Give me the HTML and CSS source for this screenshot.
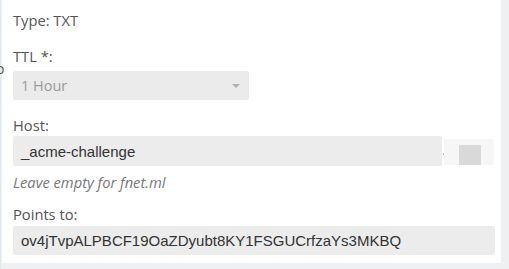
FILE: index.html
```html
<!DOCTYPE html>
<html>
<head>
<meta charset="utf-8">
<link rel="stylesheet" href="styles.css">
</head>
<body>
<div class="page">
  <span class="stray">o</span>
  <div class="card">
    <div class="line">Type: TXT</div>
    <div class="label ttl">TTL *:</div>
    <div class="select">
      <span>1 Hour</span>
      <span class="caret"></span>
    </div>
    <div class="label host">Host:</div>
    <div class="host-row">
      <div class="input host-input">_acme-challenge</div>
      <span class="dot">.</span>
      <div class="blur"><div class="blur-inner"></div></div>
    </div>
    <div class="help">Leave empty for fnet.ml</div>
    <div class="label points">Points to:</div>
    <div class="input points-input">ov4jTvpALPBCF19OaZDyubt8KY1FSGUCrfzaYs3MKBQ</div>
  </div>
</div>
</body>
</html>
```
FILE: styles.css
```css
html, body {
  margin: 0;
  padding: 0;
  background: #eef0f1;
  width: 509px;
  height: 269px;
  overflow: hidden;
}
.page {
  position: relative;
  display: flex;
  border-left: 1px solid #dbe9f2;
  height: 269px;
  box-sizing: border-box;
}
.stray {
  position: absolute;
  left: -5px;
  top: 59px;
  font: 14px "Open Sans", sans-serif;
  color: #555;
}
.card {
  margin-left: 1px;
  width: 499px;
  height: 263px;
  background: #fff;
  box-sizing: border-box;
  padding: 12px 7px 0 11px;
  display: flex;
  flex-direction: column;
  font-family: "Open Sans", sans-serif;
  font-size: 14.7px;
  color: #555;
}
.line, .label, .help {
  line-height: 16px;
  height: 16px;
  white-space: nowrap;
}
.ttl { margin-top: 20px; }
.select {
  margin-top: 7px;
  width: 236px;
  height: 29px;
  background: #ebebeb;
  border-radius: 2px;
  display: flex;
  align-items: center;
  justify-content: space-between;
  padding: 0 9px 0 8px;
  box-sizing: border-box;
  color: #9a9a9a;
  font-size: 14.5px;
}
.caret {
  width: 0;
  height: 0;
  border-left: 4px solid transparent;
  border-right: 4px solid transparent;
  border-top: 4px solid #b0b0b0;
}
.host { margin-top: 17px; }
.host-row {
  margin-top: 3px;
  display: flex;
  align-items: flex-start;
}
.input {
  height: 30px;
  background: #ececec;
  border-radius: 2px;
  box-sizing: border-box;
  padding: 0 8px;
  display: flex;
  align-items: center;
  font-family: "Liberation Sans", Arial, sans-serif;
  font-size: 15px;
  color: #333;
  white-space: nowrap;
}
.host-input { width: 433px; }
.dot {
  width: 2px;
  margin-top: 9px;
  color: #888;
  font-size: 12px;
  line-height: 12px;
}
.blur {
  margin-top: 3px;
  width: 50px;
  height: 26px;
  background: #f6f6f6;
  display: flex;
  align-items: flex-end;
  padding-left: 15px;
  box-sizing: border-box;
}
.blur-inner {
  width: 22px;
  height: 20px;
  background: #d9d9d9;
}
.help {
  margin-top: 8px;
  font-style: italic;
  color: #777;
}
.points { margin-top: 16px; }
.points-input {
  margin-top: 4px;
  width: 482px;
  height: 29px;
}
```
